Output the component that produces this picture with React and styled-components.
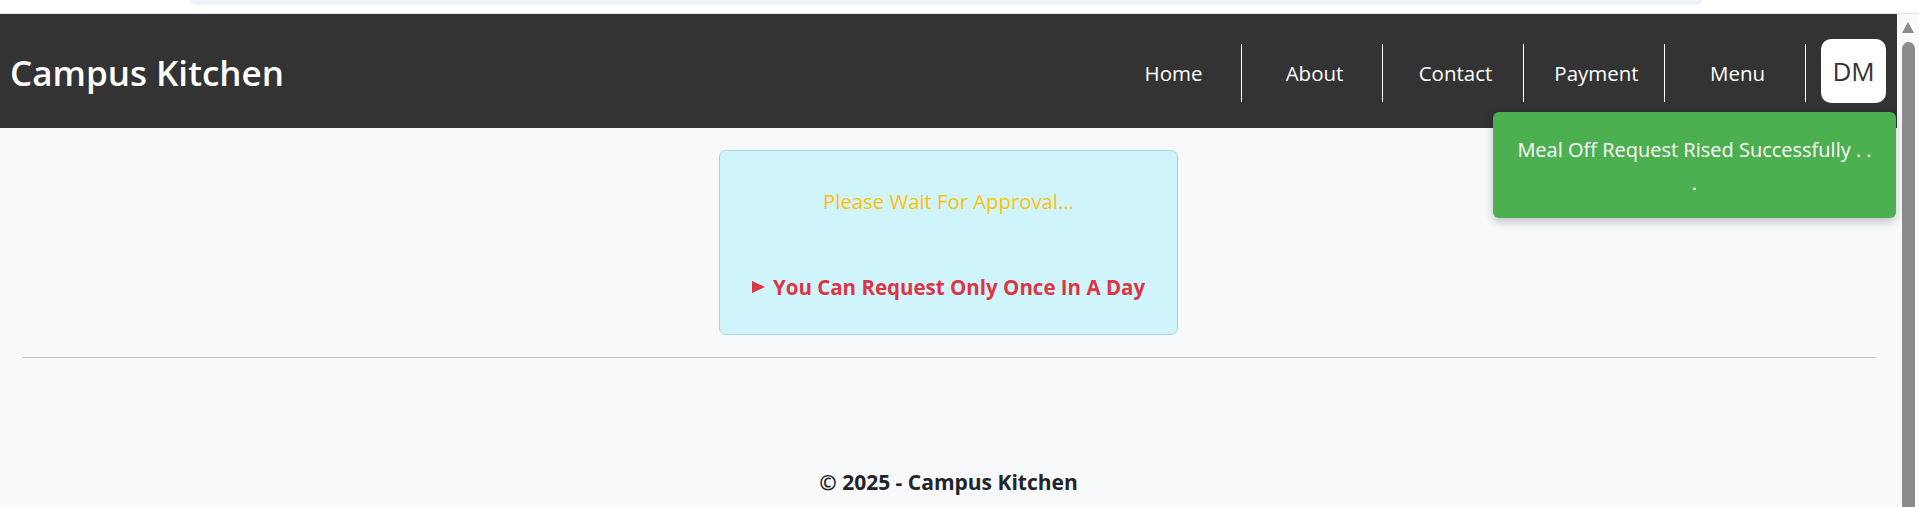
import React from "react";
import styled, { createGlobalStyle } from "styled-components";

const GlobalStyle = createGlobalStyle`
  html, body, #root { margin: 0; padding: 0; height: 100%; }
  body {
    background: #ffffff;
    font-family: "Open Sans", "Noto Sans", Arial, sans-serif;
    overflow: hidden;
  }
  * { box-sizing: border-box; }
`;

const Shell = styled.div`
  height: 100vh;
  display: flex;
  flex-direction: column;
`;

const BrowserStrip = styled.div`
  height: 14px;
  flex: none;
  background: #ffffff;
  border-bottom: 1px solid #e1e3e6;
  display: flex;
  padding-left: 190px;
`;

const AddressBar = styled.div`
  width: 1512px;
  height: 5px;
  background: #eef2f9;
  border-radius: 0 0 14px 14px;
`;

const Body = styled.div`
  flex: 1;
  display: flex;
  min-height: 0;
`;

const Page = styled.div`
  flex: 1;
  position: relative;
  display: flex;
  flex-direction: column;
  background: #f8f9fa;
`;

const Navbar = styled.nav`
  height: 114px;
  flex: none;
  background: #333333;
  display: flex;
  align-items: center;
  justify-content: space-between;
  padding: 0 11px 0 10px;
`;

const Brand = styled.div`
  color: #ffffff;
  font-size: 35px;
  font-weight: 600;
  margin-top: 2px;
`;

const NavRight = styled.div`
  display: flex;
  align-items: center;
  gap: 15px;
`;

const NavList = styled.ul`
  display: flex;
  list-style: none;
  margin: 4px 0 0 0;
  padding: 0;
`;

const NavLink = styled.li`
  width: 141px;
  height: 58px;
  border-right: 1px solid #ffffff;
  display: flex;
  align-items: center;
  justify-content: center;
  padding-left: 5px;
  color: #ffffff;
  font-size: 20.5px;
`;

const Avatar = styled.div`
  width: 65px;
  height: 64px;
  background: #ffffff;
  border-radius: 10px;
  display: flex;
  align-items: center;
  justify-content: center;
  color: #333333;
  font-size: 26px;
`;

const Toast = styled.div`
  position: absolute;
  top: 98px;
  right: 1px;
  width: 403px;
  height: 106px;
  padding: 21px 20px 0;
  background: #4caf50;
  border-radius: 6px;
  box-shadow: 0 4px 10px rgba(0, 0, 0, 0.22);
  color: #ffffff;
  font-size: 20px;
  line-height: 33px;
  text-align: center;
`;

const Main = styled.main`
  flex: 1;
  display: flex;
  flex-direction: column;
`;

const Alert = styled.div`
  width: 459px;
  height: 185px;
  margin: 22px auto 0;
  padding: 35px 16px 32px;
  background: #cff4fc;
  border: 1px solid #a9d4de;
  border-radius: 7px;
  text-align: center;
`;

const Waiting = styled.p`
  margin: 0 0 56px;
  color: #ffc107;
  font-size: 20.3px;
  line-height: 30px;
`;

const Notice = styled.div`
  display: flex;
  align-items: center;
  justify-content: center;
  color: #dc3545;
  font-size: 20.5px;
  font-weight: 700;
  line-height: 30px;
`;

const Marker = styled.span`
  width: 0;
  height: 0;
  border-left: 13px solid #dc3545;
  border-top: 6.5px solid transparent;
  border-bottom: 6.5px solid transparent;
  margin-right: 8px;
`;

const Rule = styled.hr`
  margin: 22px 21px 0 22px;
  border: 0;
  border-top: 1px solid #c6c7c8;
`;

const Footer = styled.footer`
  margin-top: 109px;
  text-align: center;
  color: #212529;
  font-size: 21px;
  font-weight: 700;
  line-height: 30px;
`;

const ScrollTrack = styled.div`
  width: 22px;
  flex: none;
  background: #f9f9f9;
  display: flex;
  flex-direction: column;
  align-items: flex-start;
  padding-left: 4px;
`;

const ScrollArrow = styled.div`
  margin-top: 8px;
  margin-left: 1px;
  width: 0;
  height: 0;
  border-left: 6.5px solid transparent;
  border-right: 6.5px solid transparent;
  border-bottom: 11px solid #8b8b8b;
`;

const ScrollThumb = styled.div`
  margin-top: 9px;
  margin-left: 1px;
  width: 13px;
  flex: 1;
  background: #8b8b8b;
  border-radius: 7px 7px 0 0;
`;

const links = ["Home", "About", "Contact", "Payment", "Menu"];

export default function App() {
  return (
    <>
      <GlobalStyle />
      <Shell>
        <BrowserStrip>
          <AddressBar />
        </BrowserStrip>
        <Body>
          <Page>
            <Navbar>
              <Brand>Campus Kitchen</Brand>
              <NavRight>
                <NavList>
                  {links.map((l) => (
                    <NavLink key={l}>{l}</NavLink>
                  ))}
                </NavList>
                <Avatar>DM</Avatar>
              </NavRight>
            </Navbar>
            <Main>
              <Alert>
                <Waiting>Please Wait For Approval...</Waiting>
                <Notice>
                  <Marker />
                  You Can Request Only Once In A Day
                </Notice>
              </Alert>
              <Rule />
              <Footer>© 2025 - Campus Kitchen</Footer>
            </Main>
            <Toast>Meal Off Request Rised Successfully . . .</Toast>
          </Page>
          <ScrollTrack>
            <ScrollArrow />
            <ScrollThumb />
          </ScrollTrack>
        </Body>
      </Shell>
    </>
  );
}
